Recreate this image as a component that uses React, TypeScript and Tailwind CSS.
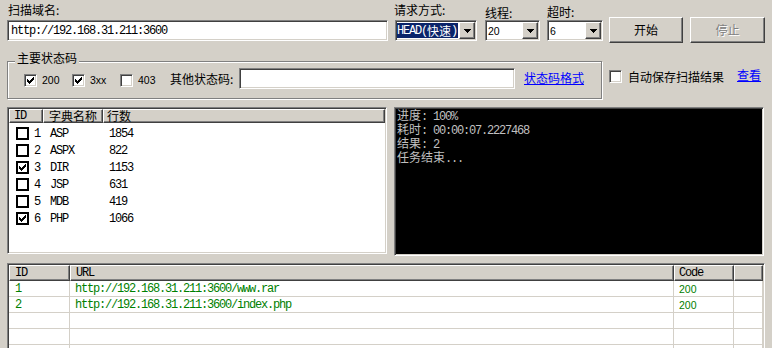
import React from 'react';

const mono = "font-['Liberation_Mono',monospace] tracking-[-1.2px]";
const sans = "font-['Liberation_Sans',sans-serif] text-[10.5px]";
const sunken =
  'border border-t-[#808080] border-l-[#808080] border-b-white border-r-white shadow-[inset_1px_1px_0_#404040,inset_-1px_-1px_0_#d4d0c8]';
const raised =
  'border border-t-white border-l-white border-b-[#404040] border-r-[#404040] shadow-[inset_-1px_-1px_0_#808080,inset_1px_1px_0_#d4d0c8]';

const M = ({ children }: { children: React.ReactNode }) => (
  <span className={mono}>{children}</span>
);

const CheckMark = () => (
  <svg width="7" height="7" viewBox="0 0 7 7" shapeRendering="crispEdges">
    <path
      d="M0 2h1v3H0zM1 3h1v3H1zM2 4h1v3H2zM3 3h1v3H3zM4 2h1v3H4zM5 1h1v3H5zM6 0h1v3H6z"
      fill="#000"
    />
  </svg>
);

const Checkbox = ({ checked }: { checked?: boolean }) => (
  <div className={`w-[13px] h-[13px] shrink-0 bg-white flex items-center justify-center ${sunken}`}>
    {checked && <CheckMark />}
  </div>
);

const ListCheckbox = ({ checked }: { checked?: boolean }) => (
  <div className="w-[13px] h-[13px] shrink-0 bg-white border-2 border-black flex items-center justify-center">
    {checked && <CheckMark />}
  </div>
);

const DropArrow = () => (
  <div className={`w-[16px] h-[17px] shrink-0 bg-[#d4d0c8] flex items-center justify-center ${raised}`}>
    <svg width="7" height="4" viewBox="0 0 7 4" shapeRendering="crispEdges">
      <path d="M0 0h7v1H0zM1 1h5v1H1zM2 2h3v1H2zM3 3h1v1H3z" fill="#000" />
    </svg>
  </div>
);

const dicts = [
  { id: 1, name: 'ASP', count: 1854, checked: false },
  { id: 2, name: 'ASPX', count: 822, checked: false },
  { id: 3, name: 'DIR', count: 1153, checked: true },
  { id: 4, name: 'JSP', count: 631, checked: false },
  { id: 5, name: 'MDB', count: 419, checked: false },
  { id: 6, name: 'PHP', count: 1066, checked: true },
];

const results = [
  { id: '1', url: 'http://192.168.31.211:3600/www.rar', code: '200' },
  { id: '2', url: 'http://192.168.31.211:3600/index.php', code: '200' },
  { id: '', url: '', code: '' },
  { id: '', url: '', code: '' },
  { id: '', url: '', code: '' },
];

export default function App() {
  return (
    <div className="w-[772px] h-[348px] bg-[#d4d0c8] overflow-hidden font-['Noto_Sans_CJK_SC',sans-serif] text-[12px] leading-[12px] text-black">
      {/* top row */}
      <div className="flex items-start">
        <div className="ml-[7px] w-[381px]">
          <div className="h-[20px] pt-[4px] pl-[1px]">扫描域名:</div>
          <div className={`h-[21px] bg-white flex items-center pl-[3px] ${sunken}`}>
            <M>http://192.168.31.211:3600</M>
          </div>
        </div>

        <div className="ml-[7px] w-[82px]">
          <div className="h-[20px] pt-[4px] -ml-[1px]">请求方式:</div>
          <div className={`h-[21px] bg-white flex p-[1px] ${sunken}`}>
            <div className="flex-1 flex items-center">
              <span className="h-[15px] flex items-center bg-[#0a246a] text-white pr-[1px]">
                <M>HEAD(</M>快速<M>)</M>
              </span>
            </div>
            <DropArrow />
          </div>
        </div>

        <div className="ml-[8px] w-[55px]">
          <div className="h-[20px] pt-[7px]">线程:</div>
          <div className={`h-[21px] bg-white flex p-[1px] ${sunken}`}>
            <div className={`flex-1 flex items-center pl-[1px] ${sans}`}>20</div>
            <DropArrow />
          </div>
        </div>

        <div className="ml-[7px] w-[56px]">
          <div className="h-[20px] pt-[6px]">超时:</div>
          <div className={`h-[21px] bg-white flex p-[1px] ${sunken}`}>
            <div className={`flex-1 flex items-center pl-[1px] ${sans}`}>6</div>
            <DropArrow />
          </div>
        </div>

        <button className={`ml-[6px] mt-[17px] w-[74px] h-[26px] bg-[#d4d0c8] flex items-center justify-center ${raised}`}>
          开始
        </button>
        <button
          disabled
          className={`ml-[7px] mt-[17px] w-[75px] h-[26px] bg-[#d4d0c8] flex items-center justify-center text-[#808080] [text-shadow:1px_1px_0_#fff] ${raised}`}
        >
          停止
        </button>
      </div>

      {/* status code group */}
      <div className="flex items-start mt-[18px]">
        <div className="relative ml-[7px] w-[595px] h-[38px] border border-[#808080] shadow-[inset_1px_1px_0_#fff,1px_1px_0_#fff]">
          <span className="absolute left-[7px] top-[-10px] px-[2px] bg-[#d4d0c8]">主要状态码</span>
          <div className="flex items-start pt-[6px] pl-[16px]">
            <div className="w-[48px] flex items-start">
              <div className="mt-[6px]">
                <Checkbox checked />
              </div>
              <span className={`ml-[5px] mt-[6px] leading-[12px] ${sans}`}>200</span>
            </div>
            <div className="w-[48px] flex items-start">
              <div className="mt-[6px]">
                <Checkbox checked />
              </div>
              <span className={`ml-[5px] mt-[6px] leading-[12px] ${sans}`}>3xx</span>
            </div>
            <div className="w-[50px] flex items-start">
              <div className="mt-[6px]">
                <Checkbox />
              </div>
              <span className={`ml-[5px] mt-[6px] leading-[12px] ${sans}`}>403</span>
            </div>
            <div className="w-[69px] mt-[5px]">其他状态码:</div>
            <div className={`w-[276px] h-[21px] bg-white ${sunken}`} />
            <a className="ml-[9px] mt-[4px] text-[#0000ff] underline underline-offset-[1px]">状态码格式</a>
          </div>
        </div>
        <div className="ml-[7px] mt-[9px]">
          <Checkbox />
        </div>
        <span className="ml-[6px] mt-[10px]">自动保存扫描结果</span>
        <a className="ml-[13px] mt-[8px] text-[#0000ff] underline underline-offset-[1px]">查看</a>
      </div>

      {/* dictionary list + console */}
      <div className="flex items-start ml-[7px] mt-[8px]">
        <div className={`w-[380px] h-[147px] bg-white overflow-hidden ${sunken} p-[1px]`}>
          <div className="flex h-[14px] bg-[#d4d0c8]">
            <div className={`w-[34px] pl-[4px] flex items-center ${raised}`}>
              <M>ID</M>
            </div>
            <div className={`w-[60px] pl-[5px] flex items-center ${raised}`}>字典名称</div>
            <div className={`flex-1 pl-[3px] flex items-center ${raised}`}>行数</div>
          </div>
          <div className="pt-[2px]">
            {dicts.map((d) => (
              <div key={d.id} className="flex items-center h-[17px]">
                <div className="w-[34px] pl-[7px] flex items-center">
                  <ListCheckbox checked={d.checked} />
                  <span className={`ml-[5px] ${mono}`}>{d.id}</span>
                </div>
                <div className={`w-[66px] pl-[7px] ${mono}`}>{d.name}</div>
                <div className={mono}>{d.count}</div>
              </div>
            ))}
          </div>
        </div>

        <div className={`ml-[7px] w-[370px] h-[149px] bg-black text-[#c0c0c0] pl-[2px] pt-[1px] ${sunken}`}>
          <div>
            进度<M>: 100%</M>
          </div>
          <div>
            耗时<M>: 00:00:07.2227468</M>
          </div>
          <div>
            结果<M>: 2</M>
          </div>
          <div>
            任务结束<M>...</M>
          </div>
        </div>
      </div>

      {/* result table */}
      <div className={`ml-[7px] mt-[7px] w-[758px] h-[100px] bg-white overflow-hidden p-[1px] ${sunken}`}>
        <div className="flex h-[16px] bg-[#d4d0c8]">
          <div className={`w-[61px] pl-[5px] flex items-center ${raised}`}>
            <M>ID</M>
          </div>
          <div className={`w-[604px] pl-[5px] flex items-center ${raised}`}>
            <M>URL</M>
          </div>
          <div className={`w-[60px] pl-[4px] flex items-center ${raised}`}>
            <M>Code</M>
          </div>
          <div className={`flex-1 ${raised}`} />
        </div>
        {results.map((r, i) => (
          <div key={i} className="flex h-[16px] border-b border-[#d4d0c8] text-[#008000]">
            <div className={`w-[61px] pl-[6px] flex items-center border-r border-[#d4d0c8] ${mono}`}>{r.id}</div>
            <div className={`w-[604px] pl-[5px] flex items-center border-r border-[#d4d0c8] ${mono}`}>{r.url}</div>
            <div className={`w-[60px] pl-[5px] flex items-center border-r border-[#d4d0c8] ${sans}`}>{r.code}</div>
            <div className="flex-1 border-r border-[#d4d0c8]" />
          </div>
        ))}
      </div>
    </div>
  );
}
